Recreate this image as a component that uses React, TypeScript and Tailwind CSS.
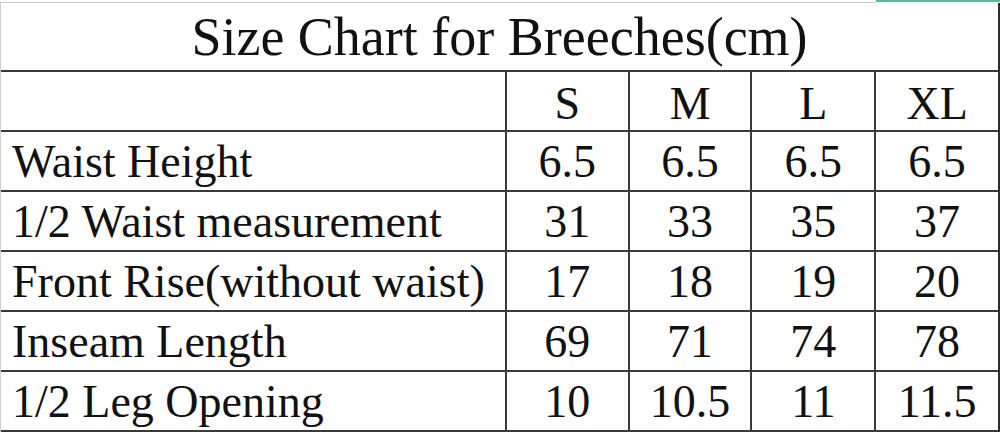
import * as React from "react";

const sizes = ["S", "M", "L", "XL"];

const rows: { label: string; values: string[] }[] = [
  { label: "Waist Height", values: ["6.5", "6.5", "6.5", "6.5"] },
  { label: "1/2 Waist measurement", values: ["31", "33", "35", "37"] },
  { label: "Front Rise(without waist)", values: ["17", "18", "19", "20"] },
  { label: "Inseam Length", values: ["69", "71", "74", "78"] },
  { label: "1/2 Leg Opening", values: ["10", "10.5", "11", "11.5"] },
];

const colWidths = ["w-[123px]", "w-[123px]", "w-[124px]", "w-[122px]"];

const App: React.FC = () => {
  return (
    <div className="w-[1000px] h-[434px] overflow-hidden bg-white text-[#111] font-['Liberation_Serif','Times_New_Roman','DejaVu_Serif',serif]">
      {/* top edge: grid line + green selection mark */}
      <div className="flex h-[3px]">
        <div className="w-[876px] border-b border-[#c9c9c9]" />
        <div className="flex-1 h-[2px] bg-[#5dba96]" />
      </div>

      <div className="border-l border-[#cfcfcf] border-r-2 border-r-[#2e2e2e]">
        {/* title */}
        <div className="h-[69px] flex items-center justify-center border-b-2 border-[#3a3a3a]">
          <span className="text-[54px] leading-none">Size Chart for Breeches(cm)</span>
        </div>

        {/* size header */}
        <div className="flex h-[60px] border-b-2 border-[#3a3a3a]">
          <div className="w-[507px] border-r-2 border-[#3a3a3a]" />
          {sizes.map((s, i) => (
            <div
              key={s}
              className={`${colWidths[i]} flex items-center justify-center pt-[5px] text-[46px] leading-none ${
                i < 3 ? "border-r-2 border-[#3a3a3a]" : ""
              }`}
            >
              {s}
            </div>
          ))}
        </div>

        {rows.map((row) => (
          <div key={row.label} className="flex h-[60px] border-b-2 border-[#3a3a3a]">
            <div className="w-[507px] flex items-center pl-[11px] pt-[2px] text-[46px] leading-none border-r-2 border-[#3a3a3a] whitespace-nowrap">
              {row.label}
            </div>
            {row.values.map((v, i) => (
              <div
                key={i}
                className={`${colWidths[i]} flex items-center justify-center pt-[2px] text-[46px] leading-none ${
                  i < 3 ? "border-r-2 border-[#3a3a3a]" : ""
                }`}
              >
                {v}
              </div>
            ))}
          </div>
        ))}
      </div>
    </div>
  );
};

export default App;
